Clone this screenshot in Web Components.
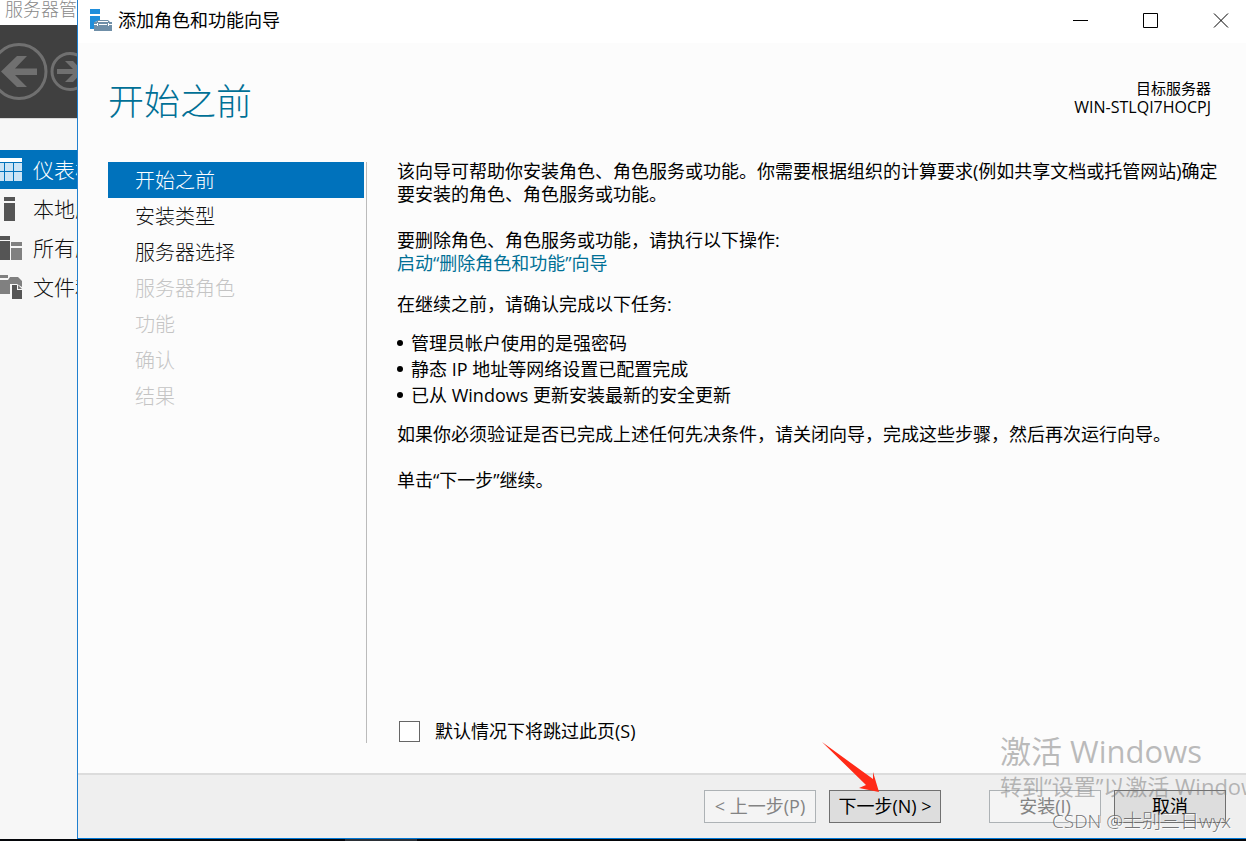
<!DOCTYPE html>
<html lang="zh-CN">
<head>
<meta charset="utf-8">
<title>添加角色和功能向导</title>
<style>
html, body { height: 100%; }
body {
  margin: 0;
  overflow: hidden;
  color: #000;
  background: #fcfcfc;
  font-family: "Open Sans", "Noto Sans CJK SC", sans-serif;
  font-weight: 400;
  font-size: 18px;
  line-height: 23px;
}
</style>
</head>
<body>
<desktop-screen>
  <server-manager slot="back"></server-manager>
  <wizard-window slot="front" heading="添加角色和功能向导">
    <wizard-header slot="header">
      开始之前
      <span slot="label">目标服务器</span>
      <span slot="server">WIN-STLQI7HOCPJ</span>
    </wizard-header>
    <wizard-steps slot="steps">
      <wizard-step state="current">开始之前</wizard-step>
      <wizard-step>安装类型</wizard-step>
      <wizard-step>服务器选择</wizard-step>
      <wizard-step state="disabled">服务器角色</wizard-step>
      <wizard-step state="disabled">功能</wizard-step>
      <wizard-step state="disabled">确认</wizard-step>
      <wizard-step state="disabled">结果</wizard-step>
    </wizard-steps>
    <wizard-intro slot="page"></wizard-intro>
    <wizard-footer slot="footer"></wizard-footer>
  </wizard-window>
  <screen-watermark slot="overlay"></screen-watermark>
</desktop-screen>

<script>
const define = (name, html, setup) => {
  const template = document.createElement('template');
  template.innerHTML = html;
  customElements.define(name, class extends HTMLElement {
    constructor() {
      super();
      this.attachShadow({ mode: 'open' }).append(template.content.cloneNode(true));
    }
    connectedCallback() {
      if (setup) setup(this, this.shadowRoot);
    }
  });
};

define('desktop-screen', `
<style>
:host { display: grid; position: relative; height: 100vh; overflow: hidden; grid-template: minmax(0, 1fr) 2px / 77px minmax(0, 1fr); }
.taskbar { grid-column: 1 / -1; background: linear-gradient(#2b3036, #2b3036) 345px 0 / 72px 2px no-repeat #05060a; }
</style>
<slot name="back"></slot>
<slot name="front"></slot>
<div class="taskbar"></div>
<slot name="overlay"></slot>`);

define('server-manager', `
<style>
:host { display: flex; flex-direction: column; overflow: hidden; white-space: nowrap; background: #f7f7f7; font-weight: 300; }
header { height: 25px; box-sizing: border-box; padding-left: 5px; overflow: hidden; line-height: 18px; color: #888; background: #fff; }
.toolbar { height: 93px; background: #404040; border-bottom: 1px solid #d9d9d9; }
.toolbar svg { display: block; }
nav { margin-top: 31px; }
</style>
<header>服务器管理器</header>
<div class="toolbar">
  <svg width="90" height="93" viewBox="0 0 90 93" fill="none" stroke="#707070">
    <circle cx="19" cy="46.500" r="27" stroke-width="3"/>
    <path d="M1 46.500 17 31h10L15 43.500h22v6.500H15l12 12H17Z" fill="#707070" stroke="none"/>
    <circle cx="70" cy="46.500" r="18" stroke-width="3"/>
    <path d="M83 46.500 73 57h-8l8-8H57v-5h16l-8-8h8Z" fill="#707070" stroke="none"/>
  </svg>
</div>
<nav>
  <manager-link current>仪表板
    <svg slot="icon" width="22" height="24" viewBox="0 0 22 24"><path fill="#fff" d="M0 0h22v4H0z"/><path fill="#cce4f5" d="M0 5h4v8H0zM5 5h8v8H5zM14 5h8v8h-8zM0 14h4v9H0zM5 14h8v9H5zM14 14h8v9h-8z"/></svg>
  </manager-link>
  <manager-link>本地服务器
    <svg slot="icon" width="22" height="24" viewBox="0 0 22 24"><path fill="#555" d="M4 0h11v4H4zM4 6h11v18H4z"/></svg>
  </manager-link>
  <manager-link>所有服务器
    <svg slot="icon" width="22" height="24" viewBox="0 0 22 24"><path fill="#555" d="M0 0h10v4H0zM0 5h10v19H0z"/><path fill="#808080" d="M11 6h11v4H11zM11 12h11v12H11z"/></svg>
  </manager-link>
  <manager-link>文件和存储服务
    <svg slot="icon" width="22" height="24" viewBox="0 0 22 24"><path fill="#808080" d="M0 0h8v3H0zM0 5h8l2-3h8l4 4v6l-5-3h-7v10H0z"/><path fill="#555" d="M12 10h5v5h5v9H12z"/><path fill="#777" d="m18 10 4 4h-4z"/></svg>
  </manager-link>
</nav>`);

define('manager-link', `
<style>
:host { display: block; color: #111; }
:host([current]) { color: #fff; background: #0072bc; }
a { display: flex; align-items: center; gap: 11px; height: 39px; font-size: 21px; color: inherit; text-decoration: none; }
span { min-width: 0; overflow: hidden; line-height: 30px; }
::slotted(svg) { flex: none; }
</style>
<a href="#"><slot name="icon"></slot><span><slot></slot></span></a>`);

define('wizard-window', `
<style>
:host { display: grid; min-width: 0; min-height: 0; grid-template: 43px 119px minmax(0, 1fr) auto / 289px minmax(0, 1fr); border-left: 1px solid #2080d0; border-bottom: 1px solid #0078d7; background: #fcfcfc; }
.bar { grid-column: 1 / -1; display: flex; align-items: flex-start; gap: 34px; padding-right: 7px; background: #fff; }
.bar svg { display: block; }
.caption { flex: 1; display: flex; gap: 6px; padding: 9px 0 0 12px; }
h1 { margin: 0; font-size: 18px; font-weight: 400; }
button { width: 36px; height: 41px; padding: 0; border: 0; background: none; display: grid; place-items: center; }
slot[name=header]::slotted(*), slot[name=footer]::slotted(*) { grid-column: 1 / -1; }
</style>
<div class="bar">
  <div class="caption"><svg width="22" height="22" viewBox="0 0 22 22"><path fill="#1f8edb" d="M0 0h10v5H0zM0 7h10v4L5 13v7H0z"/><path fill="#6f8fa8" d="M4 13h2l2-2h10l2 2h2v9H4z"/><path fill="none" stroke="#fff" d="M4 15.500h3M9 15.500h8M19 15.500h3M8 12.500h10M7.500 14v3M18.500 14v3"/></svg>
  <h1></h1></div>
  <button type="button" aria-label="最小化"><svg width="16" height="16" viewBox="0 0 16 16"><path d="M0 7.500h15" stroke="#000"/></svg></button>
  <button type="button" aria-label="最大化"><svg width="16" height="16" viewBox="0 0 16 16"><path d="M.5.5h14v14H.5z" fill="none" stroke="#000"/></svg></button>
  <button type="button" aria-label="关闭"><svg width="16" height="16" viewBox="0 0 16 16"><path d="m1 .5 14 14M15 .5 1 14.500" stroke="#000"/></svg></button>
</div>
<slot name="header"></slot>
<slot name="steps"></slot>
<slot name="page"></slot>
<slot name="footer"></slot>`, (host, root) => {
  root.querySelector('h1').textContent = host.getAttribute('heading');
});

define('wizard-header', `
<style>
:host { display: flex; justify-content: space-between; align-items: flex-start; padding: 36px 35px 0 30px; }
h2 { margin: 0; font-size: 36px; line-height: 46px; font-weight: 300; color: #007096; }
.target { display: grid; text-align: right; font-size: 15px; line-height: 19px; }
.server { font-size: 16px; }
</style>
<h2><slot></slot></h2>
<div class="target"><slot name="label"></slot><span class="server"><slot name="server"></slot></span></div>`);

define('wizard-steps', `
<style>
:host { display: block; margin: 0 0 30px 30px; padding-right: 2px; border-right: 1px solid #bbb; font-weight: 300; }
</style>
<nav aria-label="步骤"><slot></slot></nav>`);

define('wizard-step', `
<style>
:host { display: block; color: #111; }
:host([state=current]) { color: #fff; background: #0072bc; }
:host([state=disabled]) { color: #c4c4c4; }
a { display: block; height: 36px; padding-left: 27px; line-height: 38px; font-size: 20px; color: inherit; text-decoration: none; }
</style>
<a href="#"><slot></slot></a>`, (host, root) => {
  const a = root.querySelector('a');
  if (host.getAttribute('state') === 'current') a.setAttribute('aria-current', 'step');
  if (host.getAttribute('state') === 'disabled') a.setAttribute('aria-disabled', 'true');
});

define('wizard-intro', `
<style>
:host { display: flex; flex-direction: column; margin-top: -2px; padding: 0 24px 30px 30px; }
p { margin: 0 0 18px; }
.wide { margin-bottom: 23px; }
a { color: #007096; text-decoration: none; }
ul { list-style: none; margin: -4px 0 15px; padding: 0; line-height: 26px; }
li { display: flex; align-items: center; gap: 8px; }
li::before { content: ""; width: 6px; height: 6px; border-radius: 3px; background: #000; }
.skip { display: flex; align-items: center; gap: 15px; margin-top: auto; padding-left: 2px; }
input { appearance: none; box-sizing: border-box; width: 21px; height: 21px; margin: 0; border: 1px solid #666; background: #fff; }
</style>
<p class="wide">该向导可帮助你安装角色、角色服务或功能。你需要根据组织的计算要求(例如共享文档或托管网站)确定要安装的角色、角色服务或功能。</p>
<p>要删除角色、角色服务或功能，请执行以下操作:<br><a href="#">启动“删除角色和功能”向导</a></p>
<p>在继续之前，请确认完成以下任务:</p>
<ul>
  <li>管理员帐户使用的是强密码</li>
  <li>静态 IP 地址等网络设置已配置完成</li>
  <li>已从 Windows 更新安装最新的安全更新</li>
</ul>
<p class="wide">如果你必须验证是否已完成上述任何先决条件，请关闭向导，完成这些步骤，然后再次运行向导。</p>
<p>单击“下一步”继续。</p>
<div class="skip"><input type="checkbox" id="skip"><label for="skip">默认情况下将跳过此页(S)</label></div>`);

define('wizard-footer', `
<style>
:host { display: flex; justify-content: flex-end; gap: 13px; padding: 15px 20px 15px 0; border-top: 2px solid #dcdcdc; background: #efefef; }
button { position: relative; width: 112px; height: 33px; padding: 0; border: 1px solid #707070; background: #ddd; font: inherit; color: #000; white-space: nowrap; }
button:disabled { border-color: #adb2b5; background: #f4f4f4; color: #838383; }
.gap { margin-right: 35px; }
svg { position: absolute; right: 61px; bottom: 30px; overflow: visible; }
</style>
<button type="button" disabled>&lt; 上一步(P)</button>
<button type="button" class="gap">下一步(N) &gt;<svg width="56" height="50" viewBox="0 0 56 50"><path fill="#ff2a17" d="M-1 0 50 37 50 30 56 50 36 46 43 43Z"/></svg></button>
<button type="button" disabled>安装(I)</button>
<button type="button">取消</button>`);

define('screen-watermark', `
<style>
:host { position: absolute; right: 0; bottom: 7px; width: 246px; white-space: nowrap; overflow: hidden; pointer-events: none; color: rgba(120, 120, 120, .5); }
.big { font-size: 31px; line-height: 40px; }
.small { font-size: 22px; line-height: 30px; }
.csdn { padding-right: 15px; text-align: right; font-size: 19px; line-height: 26px; margin-top: 7px; color: rgba(100, 100, 100, .9); text-shadow: 1px 1px 0 rgba(255, 255, 255, .8); font-weight: 300; }
</style>
<div class="big">激活 Windows</div>
<div class="small">转到“设置”以激活 Windows。</div>
<div class="csdn">CSDN @士别三日wyx</div>`);
</script>
</body>
</html>
